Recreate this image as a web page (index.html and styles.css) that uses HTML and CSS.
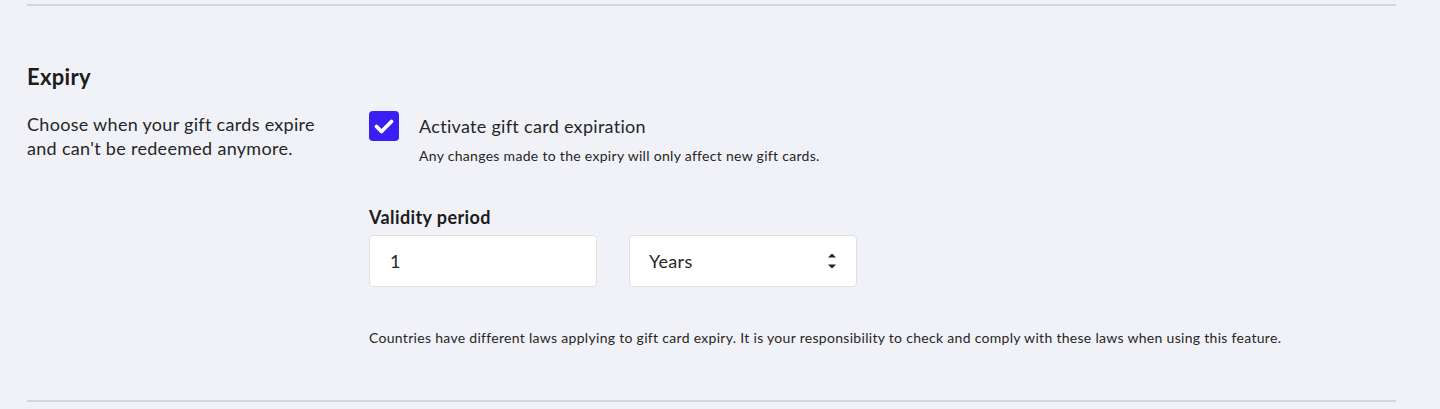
FILE: index.html
```html
<!DOCTYPE html>
<html lang="en">
<head>
<meta charset="utf-8">
<title>Expiry</title>
<link rel="stylesheet" href="styles.css">
</head>
<body>
<div class="page">
  <section class="section">
    <h2 class="section-title">Expiry</h2>
    <div class="section-grid">
      <p class="section-desc">Choose when your gift cards expire and can't be redeemed anymore.</p>
      <div class="section-body">
        <div class="check-row">
          <span class="checkbox">
            <svg viewBox="0 0 30 30" width="30" height="30" aria-hidden="true"><path d="M7.5 15.5l5 5 10-10" fill="none" stroke="#fff" stroke-width="3.8" stroke-linecap="round" stroke-linejoin="round"/></svg>
          </span>
          <div class="check-text">
            <div class="check-label">Activate gift card expiration</div>
            <div class="check-help">Any changes made to the expiry will only affect new gift cards.</div>
          </div>
        </div>
        <div class="field">
          <div class="field-label">Validity period</div>
          <div class="field-row">
            <div class="input">1</div>
            <div class="input select">
              <span>Years</span>
              <svg class="arrows" viewBox="0 0 10 20" width="10" height="20" aria-hidden="true"><path d="M1 6.5L5 2.5 9 6.5Z M1 13.5L5 17.5 9 13.5Z" fill="#222"/></svg>
            </div>
          </div>
        </div>
        <p class="note">Countries have different laws applying to gift card expiry. It is your responsibility to check and comply with these laws when using this feature.</p>
      </div>
    </div>
  </section>
</div>
</body>
</html>
```

FILE: styles.css
```css
html, body {
  margin: 0;
  padding: 0;
}
body {
  background: #f1f2f7;
  font-family: Lato, "Noto Sans", sans-serif;
  color: #262626;
  height: 409px;
  overflow: hidden;
  letter-spacing: 0.3px;
}
.page {
  padding: 4px 44px 0 27px;
}
.section {
  border-top: 2px solid #d5d6dc;
  border-bottom: 2px solid #d5d6dc;
  padding: 57px 0 53px;
}
.section-title {
  margin: 0;
  font-size: 22px;
  line-height: 28px;
  font-weight: 700;
  color: #1c1c1c;
}
.section-grid {
  display: grid;
  grid-template-columns: 342px 1fr;
  margin-top: 21px;
}
.section-desc {
  margin: 0;
  font-size: 18px;
  line-height: 24px;
  width: 300px;
}
.section-body {
  display: flex;
  flex-direction: column;
}
.check-row {
  display: flex;
  gap: 20px;
  margin-top: -1px;
}
.checkbox {
  width: 30px;
  height: 30px;
  border-radius: 4px;
  background: #3a1ff5;
  flex: none;
  display: block;
}
.checkbox svg {
  display: block;
}
.check-text {
  padding-top: 3px;
}
.check-label {
  font-size: 18px;
  line-height: 24px;
}
.check-help {
  font-size: 14px;
  line-height: 18px;
  margin-top: 9px;
}
.field {
  margin-top: 40px;
}
.field-label {
  font-size: 18px;
  line-height: 24px;
  font-weight: 700;
  letter-spacing: 0.4px;
  color: #1c1c1c;
}
.field-row {
  display: flex;
  gap: 32px;
  margin-top: 6px;
}
.input {
  box-sizing: border-box;
  width: 228px;
  height: 52px;
  background: #fff;
  border: 1px solid #e0e1e7;
  border-radius: 4px;
  padding: 0 20px;
  display: flex;
  align-items: center;
  font-size: 18px;
}
.select {
  justify-content: space-between;
  padding: 0 19px 0 19px;
}
.arrows {
  display: block;
  margin-right: 0;
}
.note {
  margin: 42px 0 0;
  font-size: 14px;
  line-height: 18px;
}
```
